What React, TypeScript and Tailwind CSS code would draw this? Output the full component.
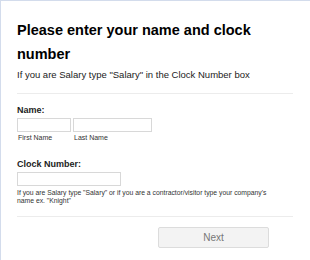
export default function App() {
  return (
    <div
      className="w-[310px] h-[260px] bg-white border-t border-l border-[#d3dcec] overflow-hidden"
      style={{ fontFamily: '"Liberation Sans", Arial, sans-serif' }}
    >
      <div className="pl-[16px] pr-[16px] pt-[17px]">
        <h1 className="text-[14.5px] leading-[24px] font-bold text-black w-[276px]">
          Please enter your name and clock number
        </h1>
        <p className="text-[9.5px] leading-[12px] text-[#222] mt-[3px]">
          If you are Salary type "Salary" in the Clock Number box
        </p>
        <div className="h-px bg-[#ececec] mt-[12px] w-[276px]" />
        <div className="mt-[11px] text-[9px] leading-[11px] font-bold text-[#222]">Name:</div>
        <div className="flex gap-[2px] mt-[2px]">
          <div className="flex flex-col">
            <input className="w-[54px] h-[14px] border border-[#d8d8d8] bg-white outline-none" />
            <span className="text-[7px] leading-[8px] text-[#333] mt-[2px] ml-[1px]">First Name</span>
          </div>
          <div className="flex flex-col">
            <input className="w-[79px] h-[14px] border border-[#d8d8d8] bg-white outline-none" />
            <span className="text-[7px] leading-[8px] text-[#333] mt-[2px] ml-[1px]">Last Name</span>
          </div>
        </div>
        <div className="mt-[17px] text-[9px] leading-[11px] font-bold text-[#222]">Clock Number:</div>
        <input className="block mt-[2px] w-[104px] h-[14px] border border-[#d8d8d8] bg-white outline-none" />
        <p className="text-[6.8px] leading-[8px] text-[#333] mt-[3px] w-[262px]">
          If you are Salary type "Salary" or if you are a contractor/visitor type your company's name ex. "Knight"
        </p>
        <div className="h-px bg-[#ececec] mt-[11px] w-[276px]" />
        <button className="block mt-[10px] ml-[141px] w-[111px] h-[21px] bg-[#f3f3f3] border border-[#dcdcdc] rounded-[2px] text-[10px] text-[#777]">
          Next
        </button>
      </div>
    </div>
  );
}
